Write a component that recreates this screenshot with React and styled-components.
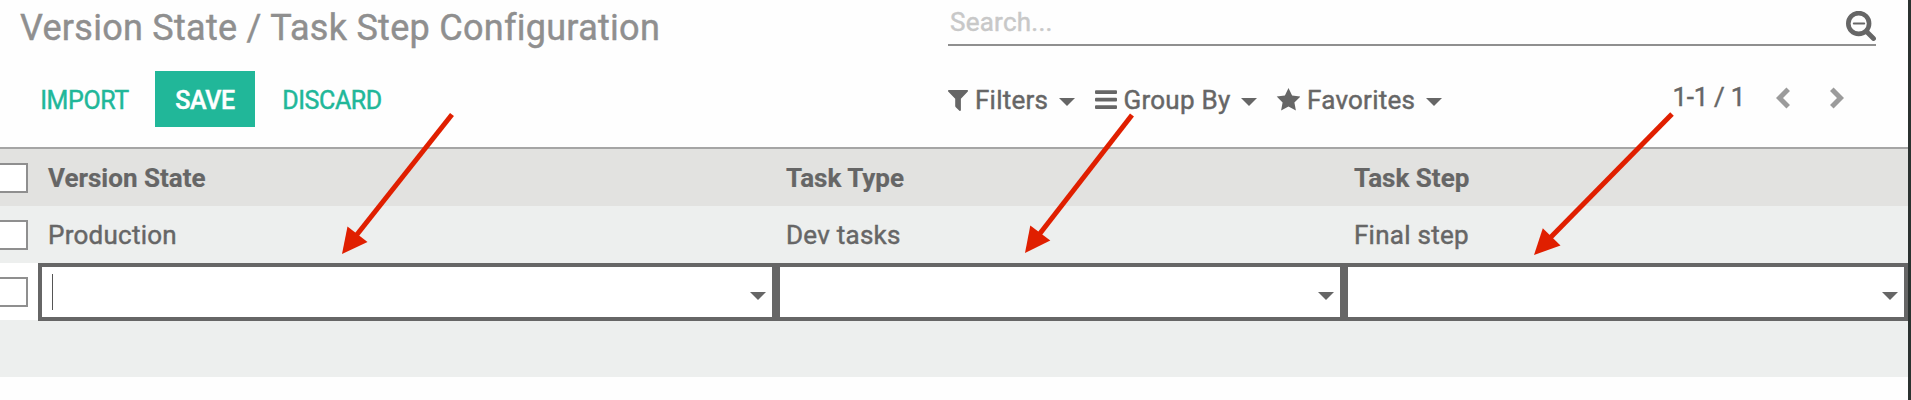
import React from 'react';
import styled, { createGlobalStyle } from 'styled-components';

const GlobalStyle = createGlobalStyle`
  * { box-sizing: border-box; }
  body {
    margin: 0;
    background: #fefefe;
    color: #666;
    font-family: Roboto, "Liberation Sans", sans-serif;
    font-size: 26px;
    letter-spacing: 0.25px;
    -webkit-text-stroke: 0.45px currentColor;
    overflow: hidden;
  }
`;

const Page = styled.div`
  position: relative;
  height: 400px;
  border-right: 3px solid #2b3230;
`;

const ControlPanel = styled.header`
  display: grid;
  grid-template-columns: 948px 928px;
  grid-template-rows: 46px 101px;
  height: 149px;
  border-bottom: 2px solid #a5a5a5;
`;

const Title = styled.h1`
  margin: 0;
  padding: 7px 0 0 20px;
  font-size: 36px;
  font-weight: 400;
  line-height: 42px;
  letter-spacing: 0.28px;
  color: #8f8f8f;
  white-space: nowrap;
`;

const SearchBox = styled.div`
  display: flex;
  justify-content: space-between;
  border-bottom: 2px solid #8f8f8f;
`;

const SearchInput = styled.input`
  flex: 1;
  height: 30px;
  margin-top: 7px;
  padding: 0 0 0 2px;
  border: 0;
  outline: 0;
  background: transparent;
  font: inherit;
  letter-spacing: inherit;
  line-height: 30px;
  color: #666;
  &::placeholder { color: #c8c8c8; opacity: 1; -webkit-text-stroke: 0.45px #c8c8c8; }
`;

const SearchIcon = styled.svg`
  width: 30px;
  height: 30px;
  margin-top: 11px;
`;

const Actions = styled.div`
  display: flex;
  align-items: flex-start;
  padding: 25px 0 0 14px;
`;

const Button = styled.button`
  height: 56px;
  width: ${(p) => p.$width}px;
  padding: 2px 0 0;
  border: 0;
  background: ${(p) => (p.$primary ? '#21b799' : 'transparent')};
  color: ${(p) => (p.$primary ? '#fff' : '#21b799')};
  font: ${(p) => (p.$primary ? 500 : 400)} 25px Roboto, sans-serif;
  letter-spacing: -0.4px;
  text-transform: uppercase;
`;

const Tools = styled.div`
  display: flex;
  align-items: flex-start;
  padding-top: 38px;
`;

const Filter = styled.div`
  display: flex;
  align-items: center;
  height: 32px;
  width: ${(p) => p.$width}px;
  white-space: nowrap;
`;

const FilterIcon = styled.svg`
  flex: none;
  width: 24px;
  height: 24px;
  margin-right: ${(p) => p.$gap}px;
  fill: #666;
`;

const Caret = styled.span`
  width: 0;
  height: 0;
  margin: 3px 0 0 11px;
  border: 8px solid transparent;
  border-top-color: #666;
  border-bottom: 0;
`;

const Pager = styled.div`
  display: flex;
  align-items: flex-start;
  margin-left: auto;
  padding-right: 32px;
`;

const PagerText = styled.span`
  line-height: 30px;
  margin: -2px 31px 0 0;
  letter-spacing: -0.3px;
`;

const Chevron = styled.svg`
  width: 14px;
  height: 22px;
  margin: 3px 0 0 ${(p) => p.$gap || 0}px;
  fill: none;
  stroke: #9b9b9b;
  stroke-width: 5;
`;

const Row = styled.div`
  display: grid;
  grid-template-columns: 38px 738px 568px 564px;
  align-items: center;
  height: 57px;
  background: ${(p) => p.$bg};
  font-weight: ${(p) => (p.$head ? 700 : 400)};
  letter-spacing: ${(p) => (p.$head ? '0' : '0.25px')};
  -webkit-text-stroke-width: ${(p) => (p.$head ? '0.2px' : '0.45px')};
`;

const Checkbox = styled.span`
  width: 28px;
  height: 30px;
  border: 2px solid #8f8f8f;
  border-left: 0;
  background: #fff;
`;

const Cell = styled.div`
  padding-left: 10px;
  line-height: 30px;
  white-space: nowrap;
`;

const Field = styled.div`
  display: flex;
  align-items: center;
  justify-content: space-between;
  align-self: start;
  height: 58px;
  border: 4px solid #666;
  padding: 0 6px 0 10px;
  background: #fff;
`;

const TextCursor = styled.span`
  width: 1px;
  height: 36px;
  background: #555;
  visibility: ${(p) => (p.$active ? 'visible' : 'hidden')};
`;

const FieldCaret = styled(Caret)`
  margin: 8px 0 0;
`;

const Annotations = styled.svg`
  position: absolute;
  inset: 0;
  pointer-events: none;
`;

const Arrow = ({ line, head }) => (
  <g fill="#e01f00" stroke="#e01f00">
    <line x1={line[0]} y1={line[1]} x2={line[2]} y2={line[3]} strokeWidth="5" />
    <polygon points={head} stroke="none" />
  </g>
);

export default function App() {
  return (
    <>
      <GlobalStyle />
      <Page>
        <ControlPanel>
          <Title>Version State / Task Step Configuration</Title>
          <SearchBox>
            <SearchInput placeholder="Search..." />
            <SearchIcon viewBox="0 0 30 30" fill="none" stroke="#666">
              <circle cx="12.7" cy="12.5" r="10.4" strokeWidth="4.6" />
              <path d="M7.8 12.5h10.4" strokeWidth="2" strokeLinecap="round" />
              <path d="M20.5 20.5l7 7" strokeWidth="4.8" strokeLinecap="round" />
            </SearchIcon>
          </SearchBox>
          <Actions>
            <Button $width={141}>Import</Button>
            <Button $width={100} $primary>Save</Button>
            <Button $width={154}>Discard</Button>
          </Actions>
          <Tools>
            <Filter $width={147}>
              <FilterIcon $gap={3} viewBox="0 0 24 24">
                <path d="M0.8 2H19.2Q20.6 2.4 19.6 3.8L12.9 10.7V22Q12.6 23.4 11.4 22.7L8 19.4Q7.2 18.8 7.2 18V10.7L0.4 3.8Q-0.6 2.4 0.8 2Z" />
              </FilterIcon>
              Filters
              <Caret />
            </Filter>
            <Filter $width={181}>
              <FilterIcon $gap={4.5} viewBox="0 0 24 24">
                <rect y="2.2" width="22" height="3.8" rx="1" />
                <rect y="9.8" width="22" height="3.8" rx="1" />
                <rect y="17.3" width="22" height="3.8" rx="1" />
              </FilterIcon>
              Group By
              <Caret />
            </Filter>
            <Filter $width={170}>
              <FilterIcon $gap={7} viewBox="0 0 24 24">
                <path d="M12.5 0L16.1 7.6 24.3 8.6 18.4 14.5 19.9 22.6 12.5 18.6 5.1 22.6 6.6 14.5 0.7 8.6 8.9 7.6Z" />
              </FilterIcon>
              Favorites
              <Caret />
            </Filter>
            <Pager>
              <PagerText>1-1 / 1</PagerText>
              <Chevron viewBox="0 0 14 22"><path d="M12.2 2.2L3.5 11l8.7 8.8" /></Chevron>
              <Chevron $gap={40} viewBox="0 0 14 22"><path d="M1.8 2.2L10.5 11l-8.7 8.8" /></Chevron>
            </Pager>
          </Tools>
        </ControlPanel>
        <Row $bg="#e2e2e0" $head>
          <Checkbox />
          <Cell>Version State</Cell>
          <Cell>Task Type</Cell>
          <Cell>Task Step</Cell>
        </Row>
        <Row $bg="#edefee">
          <Checkbox />
          <Cell>Production</Cell>
          <Cell>Dev tasks</Cell>
          <Cell>Final step</Cell>
        </Row>
        <Row $bg="#fff">
          <Checkbox />
          {[0, 1, 2].map((i) => (
            <Field key={i}>
              <TextCursor $active={i === 0} />
              <FieldCaret />
            </Field>
          ))}
        </Row>
        <Row $bg="#edefee" />
        <Annotations width="1908" height="400">
          <Arrow line={[452, 114.5, 355, 237]} head="342,254 347.5,226.5 367.5,242" />
          <Arrow line={[1132, 115, 1038, 236]} head="1025,253 1030.3,225.5 1050.3,240.5" />
          <Arrow line={[1672, 114, 1549, 239]} head="1534,255 1542.8,228.3 1560.5,245.5" />
        </Annotations>
      </Page>
    </>
  );
}
